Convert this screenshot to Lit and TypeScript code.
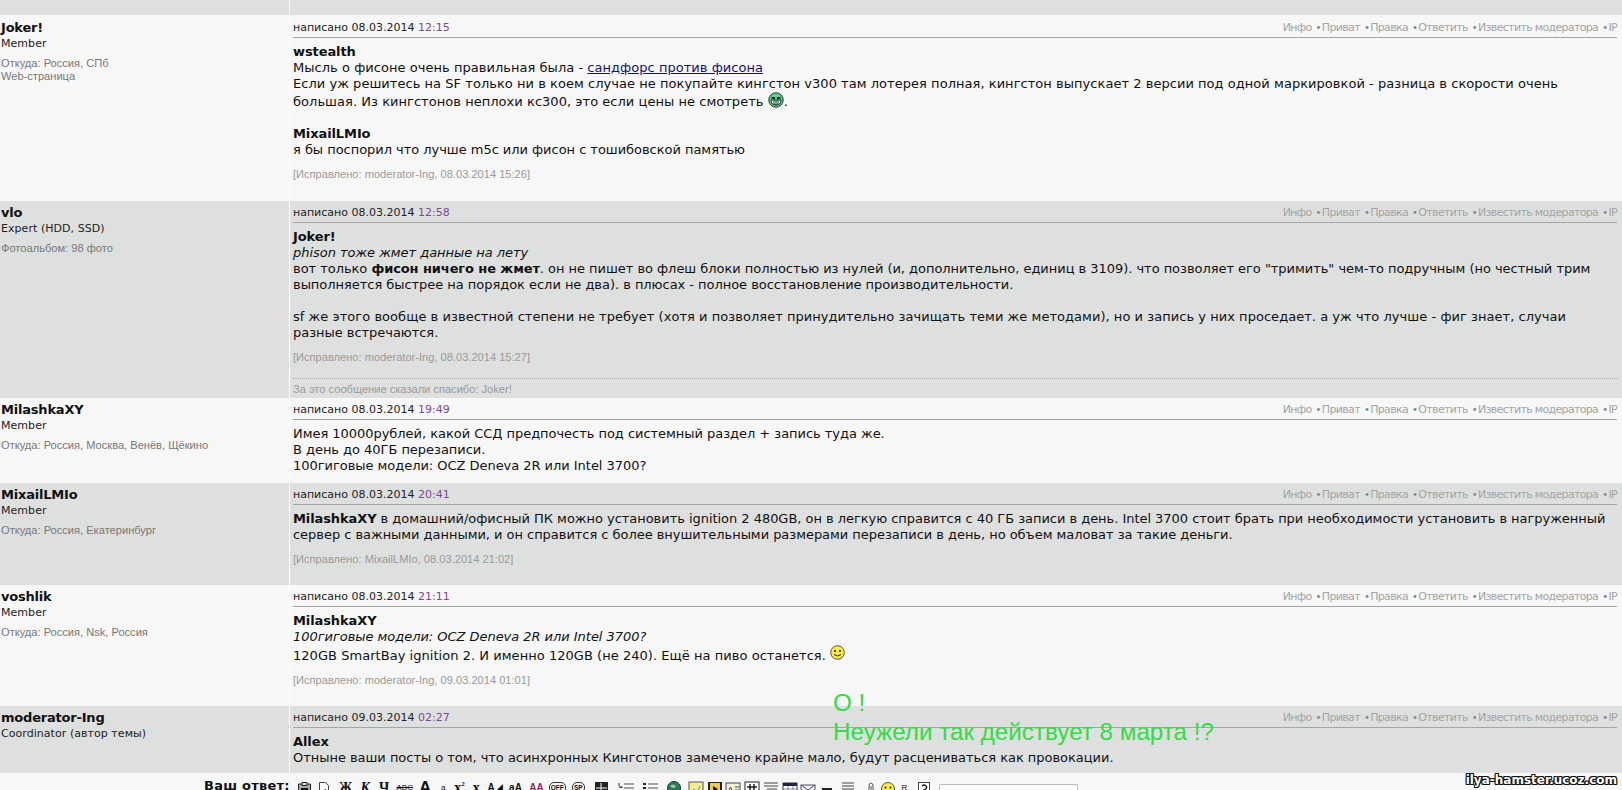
import { LitElement, html, css, svg } from "lit";
import { customElement } from "lit/decorators.js";

const grin = html`<svg class="smile" width="16" height="16" viewBox="0 0 16 16"><circle cx="8" cy="8" r="7.200" fill="#5fd08f" stroke="#1a3a2a"/><path d="M3.500 5h3.500v2h-3.500zM9 5h3.500v2H9z" fill="#14302a"/><path d="M3 8h10q0 5-5 5t-5-5z" fill="#fff" stroke="#14302a"/><path d="M6 8v4.500M8 8v5M10 8v4.500" stroke="#14302a"/></svg>`;
const smile = html`<svg class="smile up" width="15" height="15" viewBox="0 0 15 15"><circle cx="7.500" cy="7.500" r="6.800" fill="#ffe84a" stroke="#554"/><circle cx="5" cy="6" r="1" fill="#222"/><circle cx="10" cy="6" r="1" fill="#222"/><path d="M4 9.500q3.500 3 7 0" fill="none" stroke="#222"/></svg>`;

const posts = [
  { name: "Joker!", role: "Member", meta: ["Откуда: Россия, СПб", "Web-страница"], date: "08.03.2014", time: "12:15", h: 185, odd: true,
    body: html`<b>wstealth</b><br><span class="wide">Мысль о фисоне очень правильная была - <a>сандфорс против фисона</a></span><br><span class="wide">Если уж решитесь на SF только ни в коем случае не покупайте кингстон v300 там лотерея полная, кингстон выпускает 2 версии под одной маркировкой - разница в скорости очень</span><br><span class="wide">большая. Из кингстонов неплохи кс300, это если цены не смотреть</span> ${grin}.<br><br><b>MixailLMIo</b><br>я бы поспорил что лучше m5c или фисон с тошибовской памятью`,
    edit: "[Исправлено: moderator-Ing, 08.03.2014 15:26]" },
  { name: "vlo", role: "Expert (HDD, SSD)", meta: ["Фотоальбом: 98 фото"], date: "08.03.2014", time: "12:58", h: 197, odd: false,
    body: html`<b>Joker!</b><br><i>phison тоже жмет данные на лету</i><br>вот только <b>фисон ничего не жмет</b>. он не пишет во флеш блоки полностью из нулей (и, дополнительно, единиц в 3109). что позволяет его "тримить" чем-то подручным (но честный трим выполняется быстрее на порядок если не два). в плюсах - полное восстановление производительности.<br><br><span class="wide">sf же этого вообще в известной степени не требует (хотя и позволяет принудительно зачищать теми же методами), но и запись у них проседает. а уж что лучше - фиг знает, случаи</span><br>разные встречаются.`,
    edit: "[Исправлено: moderator-Ing, 08.03.2014 15:27]", thanks: "За это сообщение сказали спасибо: Joker!" },
  { name: "MilashkaXY", role: "Member", meta: ["Откуда: Россия, Москва, Венёв, Щёкино"], date: "08.03.2014", time: "19:49", h: 85, odd: true,
    body: html`Имея 10000рублей, какой ССД предпочесть под системный раздел + запись туда же.<br>В день до 40ГБ перезаписи.<br>100гиговые модели: OCZ Deneva 2R или Intel 3700?` },
  { name: "MixailLMIo", role: "Member", meta: ["Откуда: Россия, Екатеринбург"], date: "08.03.2014", time: "20:41", h: 102, odd: false,
    body: html`<b>MilashkaXY</b> в домашний/офисный ПК можно установить ignition 2 480GB, он в легкую справится с 40 ГБ записи в день. Intel 3700 стоит брать при необходимости установить в нагруженный сервер с важными данными, и он справится с более внушительными размерами перезаписи в день, но объем маловат за такие деньги.`,
    edit: "[Исправлено: MixailLMIo, 08.03.2014 21:02]" },
  { name: "voshlik", role: "Member", meta: ["Откуда: Россия, Nsk, Россия"], date: "08.03.2014", time: "21:11", h: 121, odd: true,
    body: html`<b>MilashkaXY</b><br><i>100гиговые модели: OCZ Deneva 2R или Intel 3700?</i><br><span class="wide">120GB SmartBay ignition 2. И именно 120GB (не 240). Ещё на пиво останется.</span> ${smile}`,
    edit: "[Исправлено: moderator-Ing, 09.03.2014 01:01]" },
  { name: "moderator-Ing", role: "Coordinator (автор темы)", meta: [], date: "09.03.2014", time: "02:27", h: 67, odd: false,
    body: html`<b>Allex</b><br>Отныне ваши посты о том, что асинхронных Кингстонов замечено крайне мало, будут расцениваться как провокации.` },
];

const actions = ["Инфо", "Приват", "Правка", "Ответить", "Известить модератора", "IP"];

const ic = (body: unknown, w = 16) => html`<svg width=${w} height="16" viewBox="0 0 ${w} 16">${body}</svg>`;
const t = (label: string, cls = "") => html`<span class="g ${cls}">${label}</span>`;

// Toolbar buttons, keyed by the x of their centre.
const tools: [number, unknown][] = [
  [304, ic(svg`<path d="M1.500 3h12v11h-12z" fill="#aaa" stroke="#222"/><path d="M5 1.500h5v3H5z" fill="#ddd" stroke="#222"/><path d="M4 8h7M4 11h7" stroke="#111" stroke-width="2"/>`, 15)],
  [324, ic(svg`<path d="M1.500 1.500h6l3 3v10h-9z" fill="#fff" stroke="#444"/><path d="M7 8l5 5-3 1.500z" fill="#ca8" stroke="#444"/>`, 14)],
  [347, t("Ж")],
  [365, html`<span class="g"><i>К</i></span>`],
  [384, t("Ч")],
  [404, html`<span class="g tiny"><s>ABC</s></span>`],
  [427, t("A", "big")],
  [443, t("a", "tiny")],
  [460, html`<span class="g">x<sup>2</sup></span>`],
  [475, t("x")],
  [495, t("A◢", "sm")],
  [515, t("aA", "sm")],
  [537, t("AA", "sm rd")],
  [557, t("OFF", "ov")],
  [578, t("SP", "ov")],
  [600, ic(svg`<rect x="1" y="1" width="13" height="13" fill="#222"/><path d="M7 2v11M2 7h11" stroke="#fff"/><path d="M9 9l4 4" stroke="#fff"/>`)],
  [628, ic(svg`<path d="M6 3h10M6 7h10M6 11h10" stroke="#555"/><path d="M1 2v3M1 6h3v1M1 10h3" stroke="#222"/>`)],
  [648, ic(svg`<path d="M6 3h10M6 7h10M6 11h10" stroke="#555"/><path d="M1 2h3v2H1zM1 6h3v2H1zM1 10h3v2H1z" fill="#222"/>`)],
  [677, ic(svg`<circle cx="8" cy="7" r="6.500" fill="#2a7a5a" stroke="#143"/><path d="M4 5q3-3 6 0q-2 4-6 0z" fill="#9c9"/>`)],
  [695, ic(svg`<rect x="1" y="1" width="14" height="14" fill="#f5ec90" stroke="#555"/><path d="M3 12l3-4 3 3 3-6" fill="none" stroke="#4a7"/>`)],
  [715, ic(svg`<rect x="1" y="1" width="14" height="14" fill="#222"/><rect x="3" y="2" width="10" height="12" fill="#ec5"/><path d="M6 5l5 3-5 3z" fill="#222"/>`)],
  [733, ic(svg`<rect x="1" y="2" width="14" height="12" fill="#f4f4d8" stroke="#444"/><path d="M3 11l2.500-5 2.500 5zM10 6h4M10 9h4" stroke="#444" fill="none"/>`)],
  [752, ic(svg`<rect x="1" y="1" width="14" height="14" fill="#fff" stroke="#222"/><path d="M6 3v10M10 3v10M3 6h10M3 10h10" stroke="#222" stroke-width="1.500"/>`)],
  [770, ic(svg`<path d="M1 2h14M1 5h14M4 8h10" stroke="#444"/>`)],
  [790, ic(svg`<rect x="1" y="2" width="14" height="12" fill="#fff" stroke="#335"/><rect x="1" y="2" width="14" height="3" fill="#224"/><path d="M1 8h14M6 5v9M11 5v9" stroke="#88a"/>`)],
  [808, ic(svg`<rect x="1" y="4" width="14" height="9" fill="#eef" stroke="#556"/><path d="M1 4l7 5 7-5" fill="none" stroke="#556"/>`)],
  [825, ic(svg`<rect x="1" y="7" width="10" height="2" fill="#222"/>`, 12)],
  [848, ic(svg`<path d="M2 2h12M2 5h12M2 8h12M2 11h12" stroke="#444"/>`)],
  [872, ic(svg`<path d="M5 13V5q0-3 2-3t2 3v8q0 2-2 2t-2-2z" fill="none" stroke="#555"/><path d="M7 5v7" stroke="#555"/>`, 12)],
  [888, ic(svg`<circle cx="8" cy="8" r="6.500" fill="#ffe84a" stroke="#554"/><circle cx="5.500" cy="6.500" r="1" fill="#222"/><circle cx="10.500" cy="6.500" r="1" fill="#222"/>`)],
  [903, t("R", "tiny")],
  [924, ic(svg`<rect x="1.500" y="1.500" width="11" height="13" fill="#fff" stroke="#444"/><path d="M5 5q2-2 4 0t-2 4v2" fill="none" stroke="#222" stroke-width="1.500"/>`, 14)],
];
const TOOLS_START = 295;
const toolWidth = (i: number) => {
  const cx = tools[i][0];
  const left = i === 0 ? TOOLS_START : (tools[i - 1][0] + cx) / 2;
  const right = i === tools.length - 1 ? cx + (cx - left) : (cx + tools[i + 1][0]) / 2;
  return right - left;
};

@customElement("app-root")
export class AppRoot extends LitElement {
  static styles = css`
    :host { display: block; width: 1622px; height: 790px; overflow: hidden; position: relative; font-family: "DejaVu Sans", Verdana, sans-serif; background: #f7f7f7; color: #111; }
    .top { height: 15px; display: flex; gap: 1px; padding-bottom: 1px; background: #f7f7f7; }
    .top div { background: #dee0df; }
    .top .a { width: 289px; flex: none; }
    .top .b { flex: 1; }
    .row { display: flex; gap: 1px; box-sizing: border-box; background: #fff; }
    .l { width: 289px; flex: none; box-sizing: border-box; padding: 4px 0 0 1px; }
    .r { flex: 1; min-width: 0; box-sizing: border-box; padding: 2px 5px 0 3px; display: flex; flex-direction: column; }
    .odd .l, .odd .r { background: #f7f7f7; }
    .even .l, .even .r { background: #dee0df; }
    .name { font-size: 13px; font-weight: bold; line-height: 16px; color: #111; letter-spacing: -0.2px; }
    .role { font-size: 11px; line-height: 15px; color: #222; letter-spacing: 0.05px; }
    .meta { font: 11.100px/13px "Liberation Sans", sans-serif; color: #777; margin-top: 6px; }
    .head { display: flex; justify-content: space-between; align-items: center; height: 18px; padding-bottom: 1px; border-bottom: 1px solid #a5a5a5; font-size: 11px; color: #222; }
    .head .t { color: #7c4a90; }
    .acts { font: 11px "DejaVu Sans", sans-serif; letter-spacing: -0.66px; color: #a4a4a4; display: flex; }
    .acts span + span::before { content: "•"; margin: 0 1px 0 4px; color: #8a8a8a; font-size: 10px; }
    .body { font-size: 13px; line-height: 16px; margin-top: 6px; padding-right: 9px; letter-spacing: -0.035px; color: #111; }
    .body b { letter-spacing: -0.1px; }
    .body a { color: #14146e; text-decoration: underline; }
    .wide { letter-spacing: 0.04px; }
    .smile { vertical-align: -2px; }
    .smile.up { vertical-align: 0; }
    .edit { font: 11.100px/13px "Liberation Sans", sans-serif; color: #9a9a9a; margin-top: 10px; }
    .thanks { font: 11.100px/13px "Liberation Sans", sans-serif; color: #9a9a9a; margin-top: auto; border-top: 1px dotted #aaa; padding: 4px 0 2px; }
    .tb { height: 17px; display: flex; align-items: flex-start; background: #f7f7f7; padding: 8px 0 0 204px; white-space: nowrap; }
    .lbl { width: 91px; flex: none; font: bold 13px/15px "DejaVu Sans", sans-serif; letter-spacing: 0.25px; margin-top: -3px; }
    .c { flex: none; height: 16px; display: flex; justify-content: center; align-items: flex-start; overflow: visible; }
    .c svg { flex: none; }
    .g { font: bold 14px/12px "Liberation Serif", serif; color: #111; margin-top: 1px; }
    .g sup { font-size: 7px; line-height: 0; }
    .g.sm { font: bold 10px/12px "Liberation Sans", sans-serif; }
    .g.tiny { font: 8px/12px "Liberation Sans", sans-serif; }
    .g.big { font: bold 17px/12px "Liberation Sans", sans-serif; }
    .g.rd { color: #8a2a6a; }
    .g.ov { font: bold 6.500px/9px "Liberation Sans", sans-serif; border: 1px solid #333; border-radius: 5px; padding: 0 1px; }
    .inp { width: 137px; height: 14px; margin: 3px 0 0 4px; background: #fff; border: 1px solid #bbb; border-bottom: 0; border-radius: 2px 2px 0 0; flex: none; }
    .green { position: absolute; left: 833px; top: 688px; font: 24.200px/29px "Liberation Sans", sans-serif; color: #33dc44; white-space: nowrap; }
    .wm { position: absolute; right: 5px; top: 773px; font: bold 12px/14px "DejaVu Sans", sans-serif; color: #fff; text-shadow: 1px 0 #111, -1px 0 #111, 0 1px #111, 0 -1px #111, 1px 1px #111, -1px -1px #111, 1px -1px #111, -1px 1px #111; }
  `;

  render() {
    return html`
      <div class="top"><div class="a"></div><div class="b"></div></div>
      ${posts.map((p) => html`
        <div class="row ${p.odd ? "odd" : "even"}" style="height:${p.h}px">
          <div class="l">
            <div class="name">${p.name}</div>
            <div class="role">${p.role}</div>
            ${p.meta.length ? html`<div class="meta">${p.meta.map((m) => html`${m}<br>`)}</div>` : ""}
          </div>
          <div class="r">
            <div class="head">
              <div>написано ${p.date} <span class="t">${p.time}</span></div>
              <div class="acts">${actions.map((a) => html`<span>${a}</span>`)}</div>
            </div>
            <div class="body">${p.body}</div>
            ${p.edit ? html`<div class="edit">${p.edit}</div>` : ""}
            ${p.thanks ? html`<div class="thanks">${p.thanks}</div>` : ""}
          </div>
        </div>`)}
      <div class="tb">
        <span class="lbl">Ваш ответ:</span>
        ${tools.map((tool, i) => html`<div class="c" style="width:${toolWidth(i)}px">${tool[1]}</div>`)}
        <div class="inp"></div>
      </div>
      <div class="green">О !<br>Неужели так действует 8 марта !?</div>
      <div class="wm">ilya-hamster.ucoz.com</div>
    `;
  }
}
